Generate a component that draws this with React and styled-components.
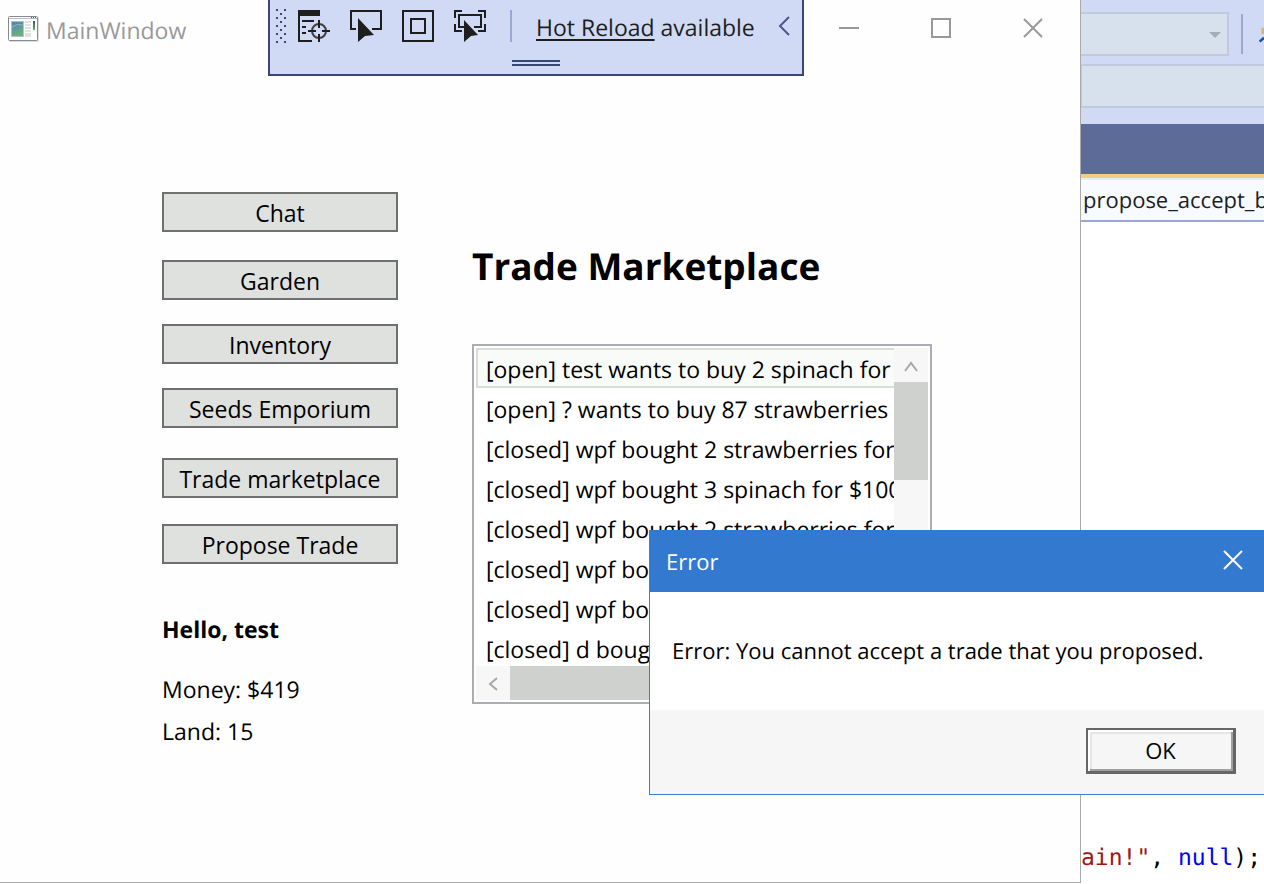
import React from "react";
import styled, { createGlobalStyle } from "styled-components";

const GlobalStyle = createGlobalStyle`
  * { box-sizing: border-box; }
  body {
    margin: 0;
    background: #fff;
    color: #000;
    font: 23px/40px "Open Sans", "Noto Sans", sans-serif;
    text-rendering: geometricPrecision;
  }
  button, select, input { font: inherit; color: inherit; }
`;

const Desktop = styled.div`
  position: relative;
  display: grid;
  grid-template-columns: minmax(0, 1fr) 183px;
  min-height: 100vh;
  overflow: hidden;
`;

const MainWindow = styled.main`
  position: relative;
  display: flex;
  flex-direction: column;
  margin-bottom: 1px;
  background: #fefefe;
  border: solid #a9a9a9;
  border-width: 0 1px 1px 0;
`;

const TitleBar = styled.header`
  display: flex;
  align-items: center;
  height: 56px;
  padding: 0 1px 0 8px;
  color: #999;
`;

const WindowTitle = styled.span`
  flex: 1;
  padding: 4px 0 0 6px;
`;

const CaptionButton = styled.button`
  display: grid;
  place-items: center;
  width: 92px;
  height: 56px;
  padding: 0;
  border: 0;
  background: none;
  color: #999;
`;

const DebugBar = styled.div`
  position: absolute;
  top: 0;
  left: 268px;
  width: 536px;
  height: 76px;
  background: #d0daf5;
  border: 2px solid #3b4576;
  border-top: 0;
  color: #1e1e1e;
`;

const DebugTools = styled.div`
  display: flex;
  align-items: center;
  height: 54px;
  padding: 0 10px 2px 6px;
`;

const ToolGroup = styled.div`
  display: flex;
  padding-left: 2px;
`;

const ToolButton = styled.button`
  display: grid;
  place-items: center;
  width: 52px;
  height: 52px;
  padding: 0;
  border: 0;
  background: none;
`;

const ToolDivider = styled.span`
  width: 2px;
  height: 32px;
  margin: 0 24px 0 14px;
  background: #9ba9cf;
`;

const HotReload = styled.span`
  flex: 1;
  padding-top: 2px;
  white-space: nowrap;
`;

const HotReloadLink = styled.a`
  color: inherit;
  text-decoration: underline;
  text-decoration-thickness: 2px;
  text-underline-offset: 3px;
`;

const CollapseButton = styled(ToolButton)`
  width: 16px;
`;

const Grip = styled.div`
  width: 48px;
  height: 6px;
  margin: 6px auto 0;
  border: solid #3b4576;
  border-width: 2px 0;
`;

const Content = styled.div`
  display: flex;
  gap: 74px;
  padding: 136px 0 0 162px;
`;

const Sidebar = styled.aside`
  width: 236px;
`;

const Nav = styled.nav`
  display: flex;
  flex-direction: column;
`;

const NavButton = styled.button`
  height: 40px;
  margin-bottom: ${(p) => p.$gap}px;
  padding: 2px 0 0;
  line-height: 34px;
  background: #dfe1de;
  border: 2px solid #707070;
`;

const Greeting = styled.h2`
  margin: 0 0 20px;
  font-size: 23px;
  font-weight: 700;
`;

const Stat = styled.p`
  margin: 0 0 2px;
`;

const Market = styled.section`
  width: 460px;
  padding-top: 44px;
`;

const Heading = styled.h1`
  margin: 0 0 48px;
  font-size: 37px;
  line-height: 60px;
  font-weight: 700;
  white-space: nowrap;
`;

const ListBox = styled.div`
  display: grid;
  grid-template-columns: minmax(0, 1fr) 34px;
  grid-template-rows: 318px 34px;
  padding: 2px;
  border: 2px solid #abadb3;
  background: #fff;
`;

const TradeList = styled.ul`
  margin: 0;
  padding: 0;
  list-style: none;
  overflow: hidden;
`;

const TradeRow = styled.li`
  height: 40px;
  padding: 0 8px;
  border: 2px solid ${(p) => (p.$active ? "#dadcda" : "transparent")};
  border-right-width: 0;
  background: ${(p) => (p.$active ? "#f9fbf9" : "none")};
  line-height: 38px;
  white-space: nowrap;
`;

const ScrollTrack = styled.div`
  display: flex;
  flex-direction: ${(p) => (p.$vertical ? "column" : "row")};
  background: #f7f7f7;
`;

const ScrollButton = styled.button`
  display: grid;
  place-items: center;
  width: 34px;
  height: 34px;
  padding: 2px 0 0;
  border: 0;
  background: none;
  color: #a8a8a8;
`;

const ScrollThumb = styled.span`
  flex: 0 0 ${(p) => p.$length}px;
  background: #cfd1ce;
`;

const Ide = styled.aside`
  overflow: hidden;
  display: flex;
  flex-direction: column;
`;

const IdeToolbars = styled.div`
  height: 124px;
  padding-top: 12px;
  background: #d0daf5;
`;

const IdeRow = styled.div`
  display: flex;
  align-items: center;
  height: 44px;
  margin-bottom: 8px;
`;

const Combo = styled.button`
  display: flex;
  flex: none;
  justify-content: flex-end;
  align-items: center;
  width: 148px;
  height: 44px;
  padding: 2px 6px 0;
  background: #d7e0ed;
  border: 2px solid #bfcade;
  border-left: 0;
`;

const IdeInput = styled.input`
  flex: none;
  width: 100%;
  height: 44px;
  background: #d7e0ed;
  border: 2px solid #bfcade;
  border-right: 0;
  border-left-width: 1px;
`;

const IdeDivider = styled.span`
  flex: none;
  width: 2px;
  height: 40px;
  margin: 0 16px 0 12px;
  background: #9ba9cf;
`;

const TabStrip = styled.div`
  height: 54px;
  background: #5d6b99;
  border-bottom: 4px solid #f5cc84;
`;

const MemberBar = styled.div`
  height: 44px;
  padding-left: 2px;
  background: #f7fbff;
  border-top: 2px solid #e0effd;
  border-bottom: 2px solid #9ba7cc;
  font-size: 22px;
  line-height: 40px;
  white-space: nowrap;
  color: #1e1e1e;
`;

const CodeArea = styled.pre`
  flex: 1;
  display: flex;
  align-items: flex-end;
  margin: 0;
  padding-bottom: 6px;
  font: 23px/40px "DejaVu Sans Mono", "Liberation Mono", monospace;
`;

const CodeString = styled.span`
  color: #a31515;
`;

const CodeKeyword = styled.span`
  color: #0000ff;
`;

const Dialog = styled.section`
  position: absolute;
  top: 530px;
  left: 649px;
  right: 0;
  background: #fff;
  border: solid #3380cc;
  border-width: 0 0 1px 1px;
`;

const DialogTitle = styled.header`
  display: flex;
  align-items: center;
  justify-content: space-between;
  height: 62px;
  padding: 0 20px 0 16px;
  background: #3279cf;
  color: #fff;
`;

const DialogCaption = styled.span`
  padding-top: 2px;
  font-size: 22px;
`;

const DialogClose = styled.button`
  display: grid;
  place-items: center;
  width: 22px;
  height: 40px;
  padding: 0 0 2px;
  border: 0;
  background: none;
`;

const DialogMessage = styled.p`
  margin: 0;
  padding: 39px 22px;
  font-size: 22px;
  white-space: nowrap;
`;

const DialogFooter = styled.footer`
  display: flex;
  justify-content: flex-end;
  height: 84px;
  padding: 18px 28px 0;
  background: #f6f6f6;
`;

const OkButton = styled.button`
  width: 150px;
  height: 46px;
  padding: 0 0 2px;
  background: #f6f6f6;
  border: solid #666;
  border-width: 2px 3px 3px 2px;
  box-shadow: inset 2px 2px #fff, inset -2px -2px #a0a0a0, inset 4px 4px #e5e5e5;
  font-size: 22px;
  line-height: 38px;
`;

const pages = [
  { label: "Chat", gap: 28 },
  { label: "Garden", gap: 24 },
  { label: "Inventory", gap: 24 },
  { label: "Seeds Emporium", gap: 30 },
  { label: "Trade marketplace", gap: 26 },
  { label: "Propose Trade", gap: 45 },
];

const trades = [
  "[open] test wants to buy 2 spinach for",
  "[open] ? wants to buy 87 strawberries for",
  "[closed] wpf bought 2 strawberries for",
  "[closed] wpf bought 3 spinach for $100",
  "[closed] wpf bought 2 strawberries for",
  "[closed] wpf bought",
  "[closed] wpf bought",
  "[closed] d bought",
];

const AppIcon = () => (
  <svg width="32" height="28" viewBox="0 0 32 28" aria-hidden="true">
    <defs>
      <linearGradient id="pane" x1="0" y1="0" x2="0.4" y2="1">
        <stop offset="0" stopColor="#4f7fb5" />
        <stop offset="1" stopColor="#6db07c" />
      </linearGradient>
      <linearGradient id="meter" x1="0" y1="0" x2="0" y2="1">
        <stop offset="0" stopColor="#2b4fa0" />
        <stop offset="1" stopColor="#5fba5a" />
      </linearGradient>
    </defs>
    <rect x="1" y="3" width="30" height="25" rx="1" fill="#ddd" />
    <rect x="0.5" y="2.5" width="29" height="24" rx="1" fill="#fff" stroke="#858b92" />
    <path d="M1 4.5H29" stroke="#b9bfc6" />
    <path d="M23 3.5h1M25 3.5h1M27 3.5h1" stroke="#555" />
    <rect x="3.5" y="7.5" width="12" height="15" fill="url(#pane)" stroke="#b9c2cc" />
    <path d="M4 13Q9 9 15 11" stroke="#8fb5cf" fill="none" />
    <path d="M17 8h6M17 11h6M17 14h6M17 17h6M17 20h6M17 22h6" stroke="#c4c4bf" />
    <rect x="25" y="7" width="2" height="9" fill="url(#meter)" />
  </svg>
);

const GripDots = () => (
  <svg width="10" height="34" viewBox="0 0 10 34" fill="#3b4576" aria-hidden="true">
    {[0, 8, 16, 24, 32].map((y) => (
      <React.Fragment key={y}>
        <rect x="0" y={y} width="2" height="2" />
        <rect x="8" y={y} width="2" height="2" />
      </React.Fragment>
    ))}
    {[4, 12, 20, 28].map((y) => (
      <rect key={y} x="4" y={y} width="2" height="2" />
    ))}
  </svg>
);

const LiveTreeIcon = () => (
  <svg width="32" height="32" viewBox="0 0 32 32" fill="none" stroke="#1e1e1e" strokeWidth="2" aria-hidden="true">
    <path d="M0 0H22V6H0Z" fill="#1e1e1e" stroke="none" />
    <path d="M1 5V31H14M4 11H16M4 17H8M4 23H8" />
    <circle cx="21" cy="21" r="7" stroke="#3c3e42" />
    <path d="M21 10V18M21 24V32M10 21H18M24 21H32" />
  </svg>
);

const SelectElementIcon = () => (
  <svg width="32" height="32" viewBox="0 0 32 32" aria-hidden="true">
    <path d="M6 19H1V1H31V19H22" fill="none" stroke="#1e1e1e" strokeWidth="2" />
    <path d="M8 8L24 25L15 26L8 32Z" fill="#1e1e1e" />
  </svg>
);

const AdornersIcon = () => (
  <svg width="32" height="32" viewBox="0 0 32 32" fill="none" stroke="#1e1e1e" strokeWidth="2" aria-hidden="true">
    <path d="M1 1H31V31H1ZM9 9H23V23H9Z" />
  </svg>
);

const TrackFocusIcon = () => (
  <svg width="32" height="32" viewBox="0 0 32 32" aria-hidden="true">
    <path
      d="M1 8V1H8M24 1H31V8M31 14V21H24M8 21H1V14M10 17H5V5H27V17H20"
      fill="none"
      stroke="#1e1e1e"
      strokeWidth="2"
    />
    <path d="M10 10L24 25L17 26L10 32Z" fill="#1e1e1e" />
  </svg>
);

export default function App() {
  return (
    <>
      <GlobalStyle />
      <Desktop>
        <MainWindow>
          <TitleBar>
            <AppIcon />
            <WindowTitle>MainWindow</WindowTitle>
            <CaptionButton aria-label="Minimize">
              <svg width="20" height="20" viewBox="0 0 20 20">
                <path d="M0 10H20" stroke="currentColor" strokeWidth="2" />
              </svg>
            </CaptionButton>
            <CaptionButton aria-label="Maximize">
              <svg width="20" height="20" viewBox="0 0 20 20">
                <path d="M1 1H19V19H1Z" fill="none" stroke="currentColor" strokeWidth="2" />
              </svg>
            </CaptionButton>
            <CaptionButton aria-label="Close">
              <svg width="20" height="20" viewBox="0 0 20 20">
                <path d="M1 1L19 19M19 1L1 19" stroke="currentColor" strokeWidth="2" />
              </svg>
            </CaptionButton>
          </TitleBar>

          <DebugBar>
            <DebugTools>
              <GripDots />
              <ToolGroup>
                <ToolButton aria-label="Go to Live Visual Tree"><LiveTreeIcon /></ToolButton>
                <ToolButton aria-label="Select Element"><SelectElementIcon /></ToolButton>
                <ToolButton aria-label="Display Layout Adorners"><AdornersIcon /></ToolButton>
                <ToolButton aria-label="Track Focused Element"><TrackFocusIcon /></ToolButton>
              </ToolGroup>
              <ToolDivider />
              <HotReload>
                <HotReloadLink href="#hot-reload">Hot Reload</HotReloadLink> available
              </HotReload>
              <CollapseButton aria-label="Collapse toolbar">
                <svg width="12" height="20" viewBox="0 0 12 20">
                  <path d="M11 1L2 10L11 19" fill="none" stroke="#4d5888" strokeWidth="2" />
                </svg>
              </CollapseButton>
            </DebugTools>
            <Grip />
          </DebugBar>

          <Content>
            <Sidebar>
              <Nav>
                {pages.map((page) => (
                  <NavButton key={page.label} $gap={page.gap}>{page.label}</NavButton>
                ))}
              </Nav>
              <Greeting>Hello, test</Greeting>
              <Stat>Money: $419</Stat>
              <Stat>Land: 15</Stat>
            </Sidebar>

            <Market>
              <Heading>Trade Marketplace</Heading>
              <ListBox>
                <TradeList>
                  {trades.map((trade, i) => (
                    <TradeRow key={i} $active={i === 0}>{trade}</TradeRow>
                  ))}
                </TradeList>
                <ScrollTrack $vertical>
                  <ScrollButton aria-label="Scroll up">
                    <svg width="14" height="12" viewBox="0 0 14 12">
                      <path d="M1 11L7 3L13 11" fill="none" stroke="currentColor" strokeWidth="2" />
                    </svg>
                  </ScrollButton>
                  <ScrollThumb $length={98} />
                </ScrollTrack>
                <ScrollTrack>
                  <ScrollButton aria-label="Scroll left">
                    <svg width="12" height="14" viewBox="0 0 12 14">
                      <path d="M10 1L3 7L10 13" fill="none" stroke="currentColor" strokeWidth="2" />
                    </svg>
                  </ScrollButton>
                  <ScrollThumb $length={280} />
                </ScrollTrack>
              </ListBox>
            </Market>
          </Content>
        </MainWindow>

        <Ide>
          <IdeToolbars>
            <IdeRow>
              <Combo aria-label="Configuration">
                <svg width="12" height="6" viewBox="0 0 12 6">
                  <path d="M0 0H12L6 6Z" fill="#a2adb9" />
                </svg>
              </Combo>
              <IdeDivider />
              <svg width="8" height="40" viewBox="0 0 8 40" aria-hidden="true">
                <path d="M4 10H8V20H4Z" fill="#d9b47a" />
                <path d="M1 32L8 26" stroke="#1c5296" strokeWidth="4" />
              </svg>
            </IdeRow>
            <IdeRow>
              <IdeInput aria-label="Process" />
            </IdeRow>
          </IdeToolbars>
          <TabStrip />
          <MemberBar>propose_accept_b</MemberBar>
          <CodeArea>
            <code>
              <CodeString>ain!"</CodeString>, <CodeKeyword>null</CodeKeyword>);
            </code>
          </CodeArea>
        </Ide>

        <Dialog role="alertdialog" aria-label="Error">
          <DialogTitle>
            <DialogCaption>Error</DialogCaption>
            <DialogClose aria-label="Close">
              <svg width="20" height="20" viewBox="0 0 20 20">
                <path d="M1 1L19 19M19 1L1 19" stroke="#fff" strokeWidth="2" />
              </svg>
            </DialogClose>
          </DialogTitle>
          <DialogMessage>Error: You cannot accept a trade that you proposed.</DialogMessage>
          <DialogFooter>
            <OkButton>OK</OkButton>
          </DialogFooter>
        </Dialog>
      </Desktop>
    </>
  );
}
